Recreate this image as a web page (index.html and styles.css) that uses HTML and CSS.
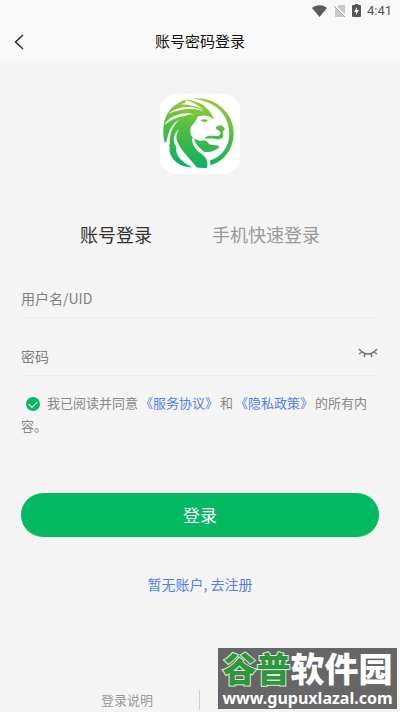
FILE: index.html
```html
<!DOCTYPE html>
<html lang="zh-CN">
<head>
<meta charset="utf-8">
<meta name="viewport" content="width=device-width, initial-scale=1">
<title>账号密码登录</title>
<link rel="stylesheet" href="styles.css">
</head>
<body>
<header class="header">
  <div class="status">
    <svg width="17" height="14" viewBox="0 0 17 14" aria-hidden="true"><path fill="#5a5a5a" d="M8.500 13 1 4C5 .2 12 .2 16 4Z"/></svg>
    <svg width="12" height="14" viewBox="0 0 12 14" aria-hidden="true"><path fill="#c8c8c8" d="M5 1h6v12H1V5Z"/><path stroke="#f8f8f8" stroke-width="2" d="m1 2 11 11"/><path stroke="#a5a5a5" d="m0 2 11 11"/></svg>
    <svg width="9" height="14" viewBox="0 0 9 14" aria-hidden="true"><path fill="#555" d="M3 0h3v1h2q1 0 1 1v10q0 1-1 1H1q-1 0-1-1V2q0-1 1-1h2Z"/><path fill="#f8f8f8" d="M5 3 2 8h2v3l3-5H5Z"/></svg>
    <span class="time">4:41</span>
  </div>
  <div class="bar">
    <button class="back" type="button" aria-label="返回"><svg width="10" height="16" viewBox="0 0 10 16" aria-hidden="true"><path fill="none" stroke="#222" stroke-width="1.400" d="M9 1 1.500 8 9 15"/></svg></button>
    <h1 class="title">账号密码登录</h1>
  </div>
</header>
<main class="main">
  <div class="logo">
    <svg viewBox="17 17 240 240" aria-hidden="true">
      <defs><linearGradient id="leaf" gradientUnits="userSpaceOnUse" x1="150" y1="30" x2="120" y2="240"><stop offset="0" stop-color="#9bce32"/><stop offset=".5" stop-color="#4cbc45"/><stop offset="1" stop-color="#08b061"/></linearGradient></defs>
      <path fill="url(#leaf)" d="M117 30C184 24 239 74 238 136C237 184 207 221 168 230L164 217C199 208 225 177 225 136C224 92 198 55 158 42C145 36 132 33 117 30Z"/>
      <path fill="url(#leaf)" d="M180 94C168 64 145 42 114 37C98 31 82 36 73 44C48 56 35 78 29 103C25 130 27 153 32 163L46 174C40 205 70 239 118 237L158 240C167 220 158 205 148 190C164 194 184 188 196 175C184 168 175 172 165 168C159 158 152 152 138 158L119 151C104 139 106 117 115 109C123 104 124 94 132 84C150 78 167 83 180 94Z"/>
      <g fill="#fff">
        <path d="M90 36Q119 38 146 64Q121 50 79 48Q104 42 90 36Z"/>
        <path d="M40 77Q66 56 101 55Q130 56 150 70Q118 57 85 64Q61 67 40 77Z"/>
        <path d="M29 111Q43 84 77 78Q98 71 122 79Q106 76 91 83Q60 86 29 111Z"/>
        <path d="M28 165Q36 164 38 155Q42 114 77 91Q61 106 54 122Q45 142 46 169L34 180Z"/>
        <path d="M76 121C66 133 62 150 72 165C80 185 100 204 128 238L119 240C83 221 62 204 66 176C52 156 58 134 76 121Z"/>
        <path d="M119 151C124 173 143 183 157 197C172 210 169 226 164 243L158 243C162 222 158 208 142 197C123 184 113 170 113 149Z"/>
      </g>
      <g fill="url(#leaf)">
        <path d="M184 117C190 111 198 109 205 113L212 122L205 131L207 143C203 153 194 155 180 151C164 150 156 153 151 149C159 140 174 142 189 143C196 143 199 138 198 131L191 126C187 124 185 121 184 117Z"/>
        <path d="M138 95C145 92 151 92 161 95L155 101C149 102 144 100 138 95Z"/>
      </g>
    </svg>
  </div>
  <div class="tabs" role="tablist">
    <button class="tab active" type="button" role="tab" aria-selected="true">账号登录</button>
    <button class="tab" type="button" role="tab" aria-selected="false">手机快速登录</button>
  </div>
  <form class="form">
    <div class="field"><input class="input" type="text" placeholder="用户名/UID" aria-label="用户名/UID"></div>
    <div class="field">
      <input class="input" type="password" placeholder="密码" aria-label="密码">
      <button class="eye" type="button" aria-label="显示密码"><svg width="20" height="10" viewBox="0 0 20 10" aria-hidden="true"><path fill="none" stroke="#777" stroke-width="1.500" d="M1 1Q10 11 19 1M4 4 1 6M7 6 6 9M13 6l1 3M16 4l3 2"/></svg></button>
    </div>
    <div class="agreement">
      <input class="check" id="agree" type="checkbox" checked><label for="agree">我已阅读并同意</label><a class="policy" href="#service">《服务协议》</a>和<a class="policy" href="#privacy">《隐私政策》</a>的所有内容。
    </div>
    <button class="submit" type="submit">登录</button>
  </form>
  <a class="register" href="#register">暂无账户, 去注册</a>
</main>
<footer class="footer">
  <a class="help" href="#help">登录说明</a>
  <div class="mark">
    <div class="mark-name"><span class="mark-green">谷普</span>软件园</div>
    <div class="mark-url">www.gupuxlazal.com</div>
  </div>
</footer>
</body>
</html>
```
FILE: styles.css
```css
* { box-sizing: border-box; }
body {
  display: flex;
  flex-direction: column;
  min-height: 100vh;
  margin: 0;
  background: #f4f4f4;
  color: #888;
  font-family: "Noto Sans CJK SC", sans-serif;
  font-size: 14px;
}
button {
  padding: 0;
  border: 0;
  background: none;
  color: inherit;
  font: inherit;
}
a { color: inherit; text-decoration: none; }
svg { display: block; }
.header { background: #f8f8f8; }
.status {
  display: flex;
  align-items: center;
  justify-content: flex-end;
  gap: 6px;
  height: 22px;
  padding-right: 8px;
}
.time { color: #555; font: 400 13px/22px Roboto, sans-serif; }
.bar {
  display: grid;
  grid-template-columns: 38px 1fr 38px;
  align-items: center;
  height: 39px;
}
.back { display: flex; justify-content: center; }
.title {
  margin: 0;
  color: #111;
  font-size: 15px;
  font-weight: 400;
  line-height: 22px;
  padding-bottom: 2px;
  text-align: center;
}
.main {
  display: flex;
  flex: 1;
  flex-direction: column;
  align-items: center;
  padding: 33px 21px 0;
}
.logo {
  width: 80px;
  height: 80px;
  overflow: hidden;
  border-radius: 16px;
  background: #fff;
}
.tabs { display: flex; gap: 60px; margin-top: 46px; }
.tab { color: #999; font-size: 18px; line-height: 28px; }
.tab.active { color: #333; }
.form { width: 100%; margin-top: 12px; }
.field {
  display: flex;
  align-items: flex-end;
  height: 58px;
  border-bottom: 1px solid #ebebeb;
}
.input {
  flex: 1;
  min-width: 0;
  height: 38px;
  padding: 0;
  border: 0;
  outline: 0;
  background: none;
  color: #333;
  font: inherit;
}
.input::placeholder { color: #808080; opacity: 1; }
.eye { padding: 0 1px 17px 0; }
.agreement {
  margin-top: 15px;
  font-size: 13px;
  line-height: 23px;
}
.check {
  width: 14px;
  height: 14px;
  margin: 0 7px 0 5px;
  appearance: none;
  border-radius: 50%;
  background: #07b862;
  vertical-align: -3px;
}
.check:checked::after {
  display: block;
  width: 7px;
  height: 4px;
  margin: 4px auto 0;
  border-bottom: 1px solid #fff;
  border-left: 1px solid #fff;
  content: "";
  transform: rotate(-45deg);
}
.policy { margin: 0 2px; color: #527fe8; }
.submit {
  display: block;
  width: 100%;
  margin-top: 56px;
  border-radius: 22px;
  background: #03b962;
  color: #fff;
  font-size: 17px;
  line-height: 44px;
}
.register { margin-top: 35px; color: #527fe8; line-height: 24px; }
.footer {
  position: relative;
  display: grid;
  grid-template-columns: 1fr 1fr;
  padding-bottom: 2px;
}
.help {
  padding-right: 46px;
  border-right: 1px solid #d0d0d0;
  color: #999;
  font-size: 13px;
  line-height: 20px;
  text-align: right;
}
.mark {
  position: absolute;
  right: 3px;
  bottom: 3px;
  width: 179px;
  height: 61px;
  background: #666;
  color: #fff;
  text-align: center;
  white-space: nowrap;
}
.mark-name { font-size: 34px; font-weight: 900; line-height: 40px; }
.mark-green {
  color: #2f963d;
  -webkit-text-stroke: 2px #d8eed8;
  paint-order: stroke fill;
}
.mark-url { font: 700 16px/20px "Noto Sans", sans-serif; }
```
